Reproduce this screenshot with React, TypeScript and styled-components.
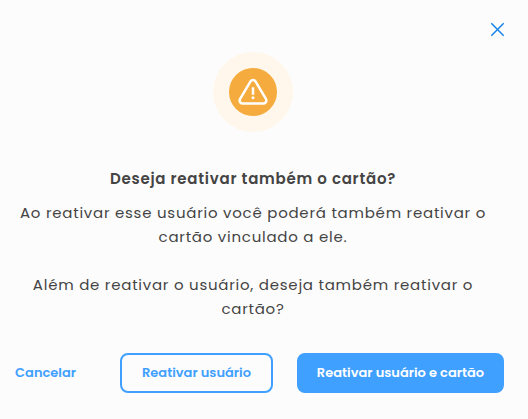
import styled, { createGlobalStyle } from 'styled-components';

const GlobalStyle = createGlobalStyle`
  * {
    box-sizing: border-box;
  }

  body {
    margin: 0;
    background-color: #fcfcfc;
    font-family: Poppins, Inter, sans-serif;
  }
`

const Modal = styled.div`
  position: relative;
  display: flex;
  flex-direction: column;
  align-items: center;
  width: 528px;
  height: 419px;
  padding: 52px 24px 26px 2px;
  background-color: #fcfcfc;
  color: #444444;
`

const CloseButton = styled.button`
  position: absolute;
  top: 22px;
  right: 23px;
  display: flex;
  padding: 0;
  border: none;
  background: none;
  cursor: pointer;
`

const IconHalo = styled.div`
  display: flex;
  align-items: center;
  justify-content: center;
  flex-shrink: 0;
  width: 80px;
  height: 80px;
  border-radius: 50%;
  background-color: #fff7eb;
`

const IconCircle = styled.div`
  display: flex;
  align-items: center;
  justify-content: center;
  width: 48px;
  height: 48px;
  border-radius: 50%;
  background-color: #f5ab3d;
`

const Title = styled.h1`
  margin: 35px 0 0;
  font-size: 15px;
  font-weight: 600;
  line-height: 24px;
  letter-spacing: 0.05em;
  white-space: nowrap;
`

const Text = styled.p<{ $top: number }>`
  margin: ${({ $top }) => $top}px 0 0;
  font-size: 15px;
  line-height: 24px;
  letter-spacing: 0.05em;
  text-align: center;
  white-space: nowrap;
`

const Actions = styled.div`
  display: flex;
  align-self: stretch;
  justify-content: flex-end;
  gap: 24px;
  margin-top: auto;
`

const Button = styled.button<{ $variant: 'outlined' | 'filled', $width: number }>`
  flex-shrink: 0;
  width: ${({ $width }) => $width}px;
  height: 40px;
  padding: 0;
  border: 2px solid #40a0ff;
  border-radius: 8px;
  background-color: ${({ $variant }) => $variant === 'filled' ? '#40a0ff' : 'transparent'};
  color: ${({ $variant }) => $variant === 'filled' ? '#ffffff' : '#40a0ff'};
  font-family: inherit;
  font-size: 13px;
  font-weight: 600;
  white-space: nowrap;
  cursor: pointer;
`

const TextButton = styled.button`
  height: 40px;
  margin-right: 20px;
  padding: 0;
  border: none;
  background: none;
  color: #40a0ff;
  font-family: inherit;
  font-size: 13px;
  font-weight: 600;
  cursor: pointer;
`

export default function App() {
  return (
    <>
      <GlobalStyle/>
      <Modal>
        <CloseButton aria-label="Fechar">
          <svg width="15" height="15" viewBox="0 0 15 15" fill="none" stroke="#1683e8" strokeWidth="1.5">
            <path d="M1.3 1.3L13.7 13.7M13.7 1.3L1.3 13.7"/>
          </svg>
        </CloseButton>
        <IconHalo>
          <IconCircle>
            <svg width="32" height="32" viewBox="0 0 32 32" fill="none" stroke="#ffffff" strokeWidth="2.5">
              <path d="M13.5 5.4L3.1 22.9C1.9 24.9 3 27.4 5.4 27.4H26.6C29 27.4 30.1 24.9 28.9 22.9L18.5 5.4C17.3 3.5 14.7 3.5 13.5 5.4Z"/>
              <path d="M16 11.3V18.8"/>
              <circle cx="16" cy="21.8" r="1.5" fill="#ffffff" stroke="none"/>
            </svg>
          </IconCircle>
        </IconHalo>
        <Title>Deseja reativar também o cartão?</Title>
        <Text $top={10}>
          Ao reativar esse usuário você poderá também reativar o<br/>
          cartão vinculado a ele.
        </Text>
        <Text $top={24}>
          Além de reativar o usuário, deseja também reativar o<br/>
          cartão?
        </Text>
        <Actions>
          <TextButton>Cancelar</TextButton>
          <Button $variant="outlined" $width={153}>Reativar usuário</Button>
          <Button $variant="filled" $width={207}>Reativar usuário e cartão</Button>
        </Actions>
      </Modal>
    </>
  )
}
